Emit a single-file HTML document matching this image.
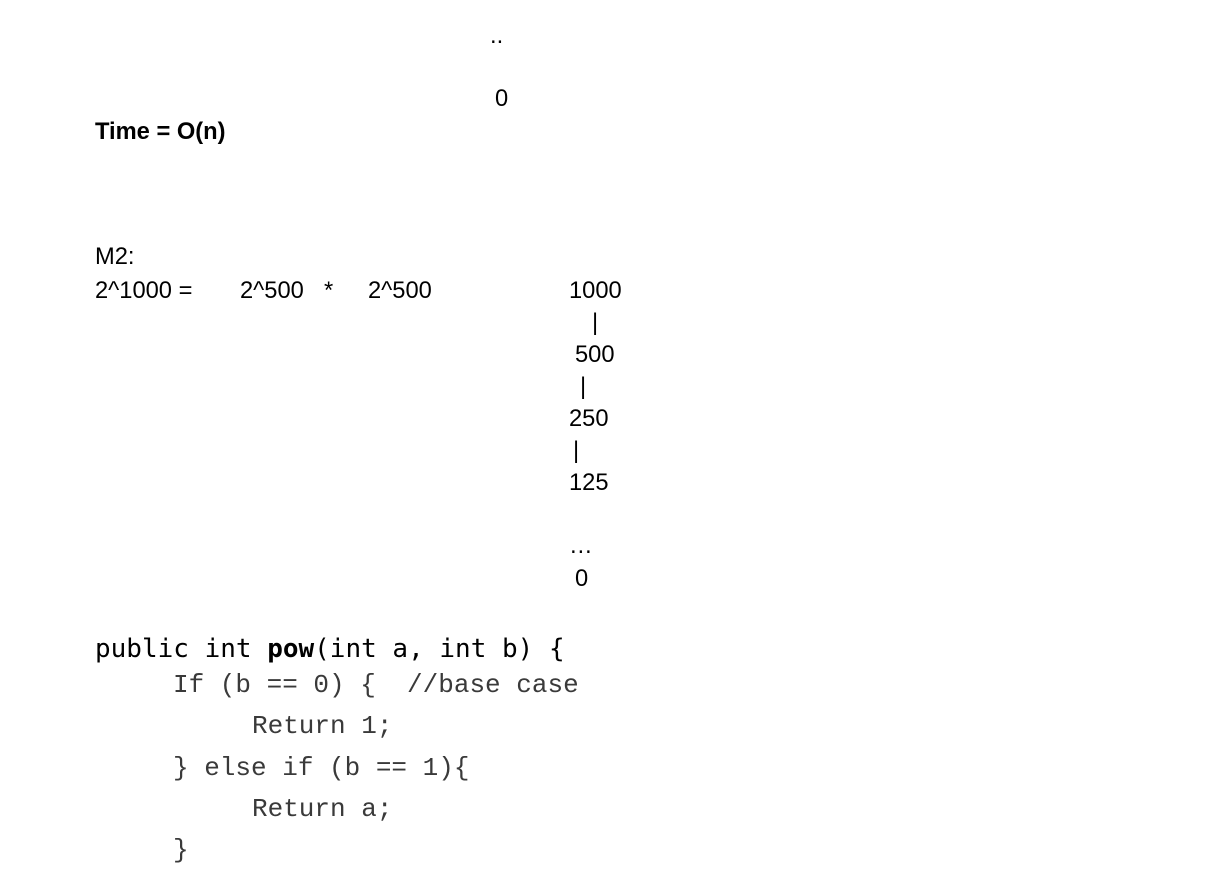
<!DOCTYPE html>
<html><head><meta charset="utf-8"><style>
body{margin:0;width:1231px;height:887px;background:#fff;position:relative;overflow:hidden}
.a{position:absolute;font-family:"Liberation Sans",Arial,sans-serif;font-size:23.7px;line-height:1;color:#000;white-space:pre}
.m{position:absolute;font-family:"Liberation Mono",monospace;font-size:26px;line-height:1;color:#3a3a3a;white-space:pre}
.d{position:absolute;font-family:"DejaVu Sans Mono",monospace;font-size:26px;line-height:1;color:#000;white-space:pre}
</style></head><body>
<div class="a" style="left:490px;top:25px">..</div>
<div class="a" style="left:495px;top:88px">0</div>
<div class="a" style="left:95px;top:121px;font-weight:bold">Time = O(n)</div>
<div class="a" style="left:95px;top:246px">M2:</div>
<div class="a" style="left:95px;top:280px">2^1000 =</div>
<div class="a" style="left:240px;top:280px">2^500</div>
<div class="a" style="left:324px;top:280px">*</div>
<div class="a" style="left:368px;top:280px">2^500</div>
<div class="a" style="left:569px;top:280px">1000</div>
<div class="a" style="left:592px;top:312px">|</div>
<div class="a" style="left:575px;top:344px">500</div>
<div class="a" style="left:580px;top:376px">|</div>
<div class="a" style="left:569px;top:408px">250</div>
<div class="a" style="left:573px;top:440px">|</div>
<div class="a" style="left:569px;top:472px">125</div>
<div class="a" style="left:569px;top:535px">…</div>
<div class="a" style="left:575px;top:568px">0</div>
<div class="d" style="left:95px;top:636px">public int <b>pow</b>(int a, int b) {</div>
<div class="m" style="left:173px;top:672px">If (b == 0) {  //base case</div>
<div class="m" style="left:252px;top:713px">Return 1;</div>
<div class="m" style="left:173px;top:755px">} else if (b == 1){</div>
<div class="m" style="left:252px;top:796px">Return a;</div>
<div class="m" style="left:173px;top:837px">}</div>
</body></html>
